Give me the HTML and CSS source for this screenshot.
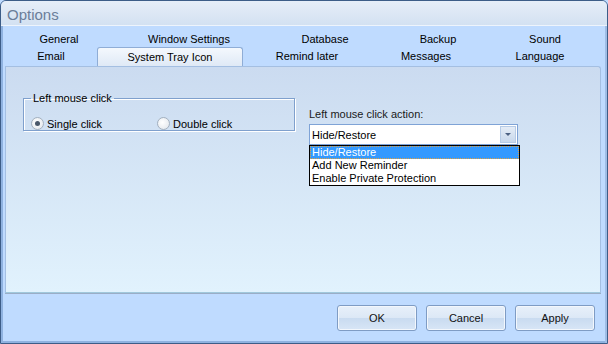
FILE: index.html
```html
<!DOCTYPE html>
<html lang="en">
<head>
    <meta charset="UTF-8">
    <title>Options</title>
    <link rel="stylesheet" href="styles.css">
</head>
<body>
    <div class="window">
        <div class="titlebar">Options</div>

        <div class="tabs">
            <div class="tab-row">
                <div class="tab" style="width:108px">General</div>
                <div class="tab" style="width:152px">Window Settings</div>
                <div class="tab" style="width:120px">Database</div>
                <div class="tab" style="width:106px">Backup</div>
                <div class="tab" style="width:108px">Sound</div>
            </div>
            <div class="tab-row last">
                <div class="tab" style="width:92px">Email</div>
                <div class="tab active" style="width:146px">System Tray Icon</div>
                <div class="tab" style="width:128px">Remind later</div>
                <div class="tab" style="width:110px">Messages</div>
                <div class="tab" style="width:118px">Language</div>
            </div>
        </div>

        <div class="panel">
            <fieldset class="group">
                <legend>Left mouse click</legend>
                <div class="radios">
                    <label class="radio"><span class="dot checked"></span>Single click</label>
                    <label class="radio"><span class="dot"></span>Double click</label>
                </div>
            </fieldset>

            <div class="action">
                <div class="action-label">Left mouse click action:</div>
                <div class="combo">
                    <div class="combo-value">Hide/Restore</div>
                    <div class="combo-arrow"><span></span></div>
                    <ul class="combo-list">
                        <li class="selected">Hide/Restore</li>
                        <li>Add New Reminder</li>
                        <li>Enable Private Protection</li>
                    </ul>
                </div>
            </div>
        </div>

        <div class="buttons">
            <button>OK</button>
            <button>Cancel</button>
            <button>Apply</button>
        </div>
    </div>
</body>
</html>
```

FILE: styles.css
```css
body {
    margin: 0;
    background: #bfdbff;
    font-family: "Liberation Sans", Arial, sans-serif;
    font-size: 11px;
    color: #000;
}
.window {
    width: 608px;
    height: 344px;
    box-sizing: border-box;
    border: 1px solid #3d5d88;
    border-radius: 6px 6px 0 0;
    background: #bfdbff;
    box-shadow: inset 2px 0 0 #8fb2e0, inset -2px 0 0 #9fbde6, inset 0 -2px 0 #8fb2e0;
    overflow: hidden;
}
.titlebar {
    height: 24px;
    padding-left: 6px;
    line-height: 28px;
    font-size: 15px;
    color: #6b7d99;
    background: linear-gradient(#e6eef9, #dbe6f4 60%, #d3e1f2);
    border-bottom: 1px solid #eef4fc;
}
.tabs {
    padding: 5px 0 0 4px;
}
.tab-row {
    display: flex;
    height: 16px;
}
.tab-row.last {
    height: 19px;
}
.tab {
    box-sizing: border-box;
    text-align: center;
    line-height: 17px;
}
.tab-row.last .tab {
    line-height: 18px;
}
.tab.active {
    height: 19px;
    background: linear-gradient(#f4f8fd, #dfe9f6);
    border: 1px solid #8fadd6;
    border-bottom: none;
    border-radius: 3px 3px 0 0;
    position: relative;
    z-index: 1;
}
.panel {
    position: relative;
    display: flex;
    height: 225px;
    margin: 0 6px 0 4px;
    background: linear-gradient(#cbdbf0, #e1f2fd);
    border: 1px solid #a4bfe2;
    border-bottom-color: #a0c8dc;
    border-radius: 0 3px 0 0;
    box-shadow: 0 1px 0 #9aadc6;
}
.group {
    width: 254px;
    height: 37px;
    margin: 25px 0 0 17px;
    padding: 0 8px;
    border: 1px solid #7fa0cd;
    box-shadow: 1px 1px 0 #fff, inset 1px 1px 0 #fff;
}
.group legend {
    padding: 0 2px;
    margin-left: -1px;
    line-height: 13px;
}
.radios {
    display: flex;
    padding-top: 12px;
}
.radio {
    display: flex;
    align-items: center;
    width: 126px;
}
.dot {
    width: 11px;
    height: 11px;
    margin-right: 3px;
    margin-left: -1px;
    border: 1px solid #a3b0bf;
    border-radius: 50%;
    background: radial-gradient(circle at 40% 40%, #fff, #dfe4ea);
    position: relative;
}
.dot.checked::after {
    content: "";
    position: absolute;
    left: 3px;
    top: 3px;
    width: 5px;
    height: 5px;
    border-radius: 50%;
    background: #4a586a;
}
.action {
    margin: 41px 0 0 14px;
}
.action-label {
    height: 16px;
    color: #1a1a1a;
}
.combo {
    position: relative;
    width: 209px;
    height: 21px;
    box-sizing: border-box;
    border: 1px solid #7fa3d6;
    background: #fff;
    display: flex;
}
.combo-value {
    flex: 1;
    padding-left: 2px;
    line-height: 20px;
}
.combo-arrow {
    width: 16px;
    margin: 1px;
    background: linear-gradient(#e4ecf6, #c8d8ec);
    border: 1px solid #b6cbe6;
    box-sizing: border-box;
    display: flex;
    align-items: center;
    justify-content: center;
}
.combo-arrow span {
    width: 0;
    height: 0;
    border-left: 3px solid transparent;
    border-right: 3px solid transparent;
    border-top: 3px solid #4c6182;
}
.combo-list {
    position: absolute;
    left: -1px;
    top: 20px;
    width: 209px;
    margin: 0;
    padding: 0;
    list-style: none;
    background: #fff;
    border: 1px solid #000;
    z-index: 2;
}
.combo-list li {
    height: 13px;
    line-height: 13px;
    padding-left: 2px;
}
.combo-list li.selected {
    background: #3399ff;
    color: #fff;
    outline: 1px dotted #e0a040;
    outline-offset: -1px;
}
.buttons {
    display: flex;
    justify-content: flex-end;
    gap: 9px;
    padding: 12px 12px 0 0;
}
button {
    width: 80px;
    height: 26px;
    font-family: inherit;
    font-size: 11px;
    color: #111;
    background: linear-gradient(#e8f0fa, #dce8f6 50%, #c9dbf0 51%, #d8e6f6);
    border: 1px solid #7f9cc4;
    border-radius: 3px;
    box-shadow: inset 0 0 0 1px #f3f7fc;
}
```
